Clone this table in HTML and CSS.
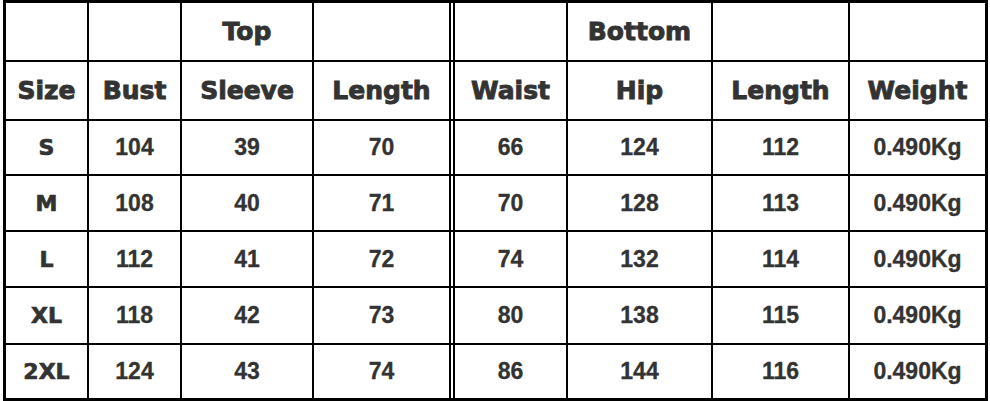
FILE: index.html
```html
<!DOCTYPE html>
<html>
<head>
<meta charset="utf-8">
<link rel="stylesheet" href="styles.css">
</head>
<body>
<div class="chart">
  <div class="c"></div><div class="c"></div><div class="c h">Top</div><div class="c"></div><div class="c dbl"></div><div class="c h">Bottom</div><div class="c"></div><div class="c"></div>
  <div class="c h">Size</div><div class="c h">Bust</div><div class="c h">Sleeve</div><div class="c h">Length</div><div class="c h dbl">Waist</div><div class="c h">Hip</div><div class="c h">Length</div><div class="c h">Weight</div>
  <div class="c sz">S</div><div class="c">104</div><div class="c">39</div><div class="c">70</div><div class="c dbl">66</div><div class="c">124</div><div class="c">112</div><div class="c">0.490Kg</div>
  <div class="c sz">M</div><div class="c">108</div><div class="c">40</div><div class="c">71</div><div class="c dbl">70</div><div class="c">128</div><div class="c">113</div><div class="c">0.490Kg</div>
  <div class="c sz">L</div><div class="c">112</div><div class="c">41</div><div class="c">72</div><div class="c dbl">74</div><div class="c">132</div><div class="c">114</div><div class="c">0.490Kg</div>
  <div class="c sz">XL</div><div class="c">118</div><div class="c">42</div><div class="c">73</div><div class="c dbl">80</div><div class="c">138</div><div class="c">115</div><div class="c">0.490Kg</div>
  <div class="c sz">2XL</div><div class="c">124</div><div class="c">43</div><div class="c">74</div><div class="c dbl">86</div><div class="c">144</div><div class="c">116</div><div class="c">0.490Kg</div>
</div>
</body>
</html>
```
FILE: styles.css
```css
html, body {
  margin: 0;
  padding: 0;
  background: #fff;
}
.chart {
  margin-left: 3px;
  width: 985px;
  box-sizing: border-box;
  display: grid;
  grid-template-columns: 81px 91px 130px 135px 115px 143px 135px 135px;
  grid-template-rows: 57px 57px 53px 54px 54px 55px 53px;
  gap: 2px;
  padding: 3px;
  background: #000;
}
.c {
  background: #fff;
  display: flex;
  align-items: center;
  justify-content: center;
  font-family: "Liberation Sans", Arial, sans-serif;
  font-weight: bold;
  font-size: 23px;
  color: #333;
  -webkit-text-stroke: 0.3px #333;
}
.h {
  font-family: "DejaVu Sans", sans-serif;
  font-size: 25px;
  font-weight: bold;
  color: #333;
  -webkit-text-stroke: 0.9px #333;
}
.sz {
  font-family: "DejaVu Sans", sans-serif;
  font-size: 22px;
  font-weight: bold;
  -webkit-text-stroke: 0.7px #333;
}
.dbl {
  padding-left: 4px;
  box-shadow: inset 2px 0 0 #fff, inset 4px 0 0 #000;
}
```
